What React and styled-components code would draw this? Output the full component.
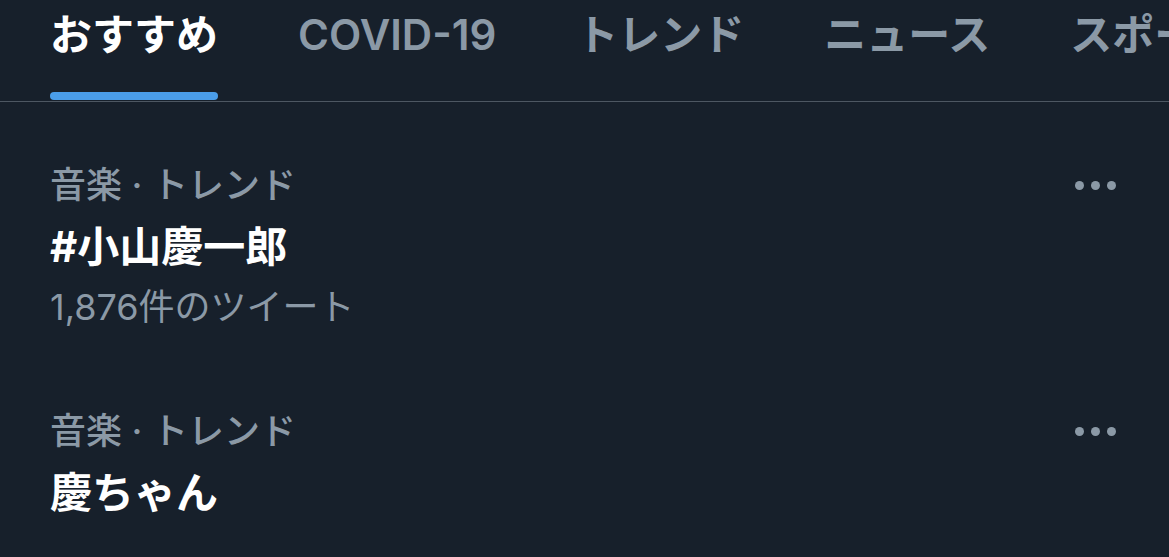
import React from "react";
import styled, { createGlobalStyle } from "styled-components";

const GlobalStyle = createGlobalStyle`
  html, body {
    margin: 0;
    padding: 0;
    background: #17202b;
  }
  body {
    font-family: "Inter", "Noto Sans CJK JP", sans-serif;
    -webkit-font-smoothing: antialiased;
  }
`;

const tabs = ["おすすめ", "COVID-19", "トレンド", "ニュース", "スポーツ", "エンタメ"];

const trends = [
  { category: "音楽 · トレンド", title: "#小山慶一郎", count: "1,876件のツイート" },
  { category: "音楽 · トレンド", title: "慶ちゃん" },
];

export default function App() {
  return (
    <>
      <GlobalStyle />
      <Page>
        <TabBar>
          {tabs.map((t, i) => (
            <Tab key={t} $active={i === 0}>
              {t}
              {i === 0 && <Indicator />}
            </Tab>
          ))}
        </TabBar>
        <List>
          {trends.map((t, i) => (
            <Item key={i}>
              <Body>
                <Category>{t.category}</Category>
                <Title>{t.title}</Title>
                {t.count && <Count>{t.count}</Count>}
              </Body>
              <More aria-label="more">
                <Dot />
                <Dot />
                <Dot />
              </More>
            </Item>
          ))}
        </List>
      </Page>
    </>
  );
}

const Page = styled.div`
  width: 1169px;
  height: 557px;
  overflow: hidden;
  background: #17202b;
`;

const TabBar = styled.nav`
  display: flex;
  gap: 80px;
  height: 101px;
  padding: 0 50px;
  border-bottom: 1px solid #4d5762;
  white-space: nowrap;
  overflow: hidden;
`;

const Tab = styled.div`
  position: relative;
  flex: none;
  padding-top: 8px;
  height: 93px;
  line-height: 54px;
  font-size: 42px;
  font-weight: ${(p) => (p.$active ? 700 : 600)};
  color: ${(p) => (p.$active ? "#ffffff" : "#8b99a6")};
`;

const Indicator = styled.span`
  position: absolute;
  left: 0;
  right: 0;
  bottom: 1px;
  height: 8px;
  border-radius: 4px;
  background: #4a9de9;
`;

const List = styled.div`
  padding-top: 20px;
`;

const Item = styled.div`
  display: flex;
  justify-content: space-between;
  align-items: flex-start;
  padding: 33px 53px 33px 50px;
`;

const Body = styled.div`
  display: flex;
  flex-direction: column;
`;

const Category = styled.div`
  font-size: 36px;
  line-height: 60px;
  font-weight: 500;
  color: #8b99a6;
`;

const Title = styled.div`
  font-size: 42px;
  line-height: 64px;
  font-weight: 700;
  color: #ffffff;
`;

const Count = styled.div`
  font-size: 36px;
  line-height: 56px;
  color: #8b99a6;
`;

const More = styled.div`
  display: flex;
  align-items: center;
  gap: 7px;
  height: 60px;
`;

const Dot = styled.span`
  width: 9px;
  height: 9px;
  border-radius: 50%;
  background: #8b99a6;
`;
